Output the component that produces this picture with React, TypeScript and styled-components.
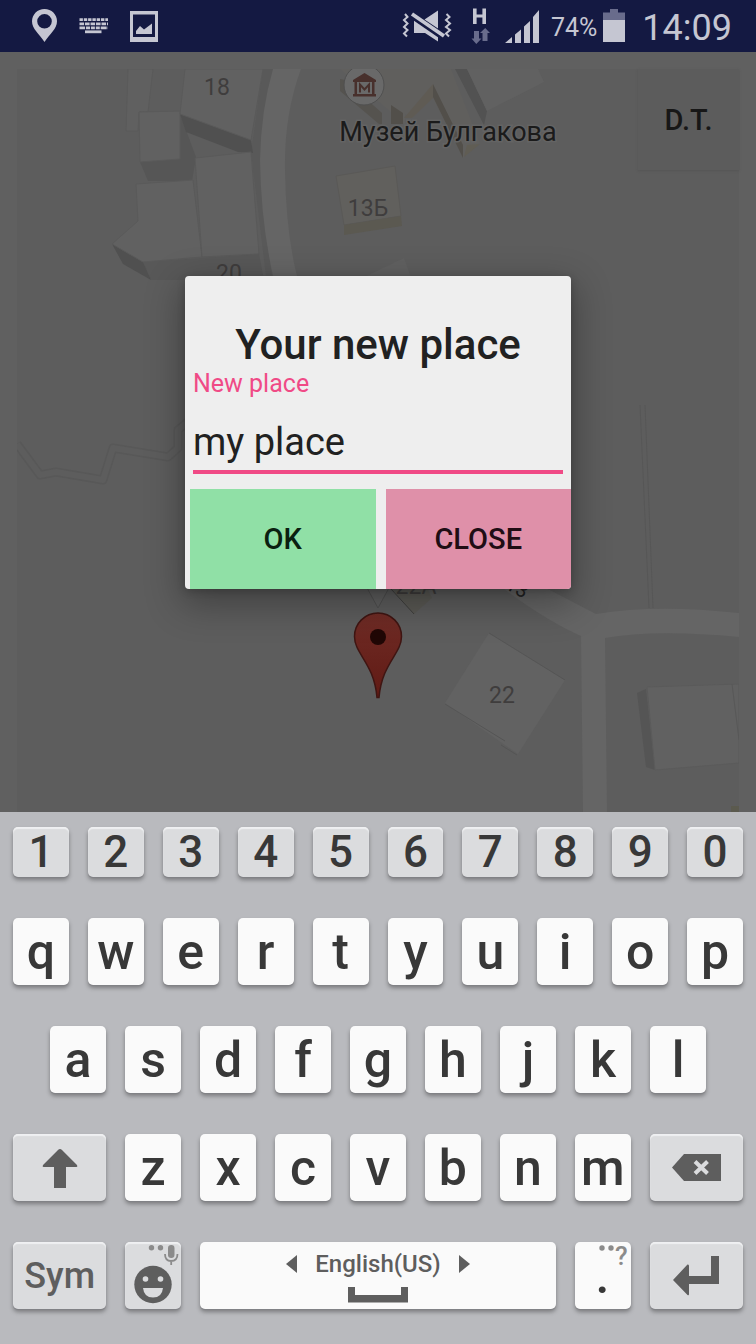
import React, { useState } from "react";
import styled, { createGlobalStyle } from "styled-components";

const GlobalStyle = createGlobalStyle`
  * { box-sizing: border-box; }
  body { margin: 0; background: #5e5e5e; font-family: Roboto, "Noto Sans", sans-serif; }
  button, input { font-family: inherit; border: 0; margin: 0; padding: 0; }
  svg { display: block; flex: none; }
`;

const Page = styled.div`
  display: flex;
  flex-direction: column;
  min-height: 100vh;
`;

/* ---------- status bar ---------- */

const StatusBar = styled.header`
  display: flex;
  align-items: center;
  justify-content: space-between;
  height: 52px;
  padding: 0 24px 0 32px;
  background: #141942;
  color: #c5c6d2;
`;

const StatusGroup = styled.div<{ $gap: number }>`
  display: flex;
  align-items: center;
  gap: ${(p) => p.$gap}px;
`;

const BatteryLevel = styled.span`
  font-size: 25px;
  line-height: 32px;
  padding-top: 4px;
`;

const Clock = styled.time`
  font-size: 36px;
  line-height: 44px;
  padding-top: 4px;
`;

const PinIcon = () => (
  <svg width="25" height="34" viewBox="32 10 25 34" fill="#c5c6d2">
    <path
      fillRule="evenodd"
      d="M44.5 10C37.500 10 32 15.500 32 22.300C32 30 39 34.500 44.500 43C50 34.500 57 30 57 22.300C57 15.500 51.500 10 44.500 10ZM44.500 15A7.300 7.300 0 1 1 44.500 29.600A7.300 7.300 0 1 1 44.500 15Z"
    />
  </svg>
);

const KeyboardIcon = () => (
  <svg width="29" height="16" viewBox="80 19 29 16" fill="none" stroke="#c5c6d2" strokeWidth="2.800">
    <path d="M80.500 20.700H109" strokeDasharray="3.400 .9" />
    <path d="M80.500 24.900H109" strokeDasharray="4.600 .9" />
    <path d="M80.500 28.900H109" strokeDasharray="5.600 .9 4 .9 4 .9 4 .9 6 1" />
    <path d="M86 32.800H102.500" />
  </svg>
);

const PictureIcon = () => (
  <svg width="28" height="31" viewBox="131 11 28 31" fill="#c5c6d2">
    <path fillRule="evenodd" d="M131 11H159V42H131ZM134 14.500V37H156V14.500Z" />
    <path d="M137 34V31L141 26L145 29.500L153 23.500V34Z" />
  </svg>
);

const MuteIcon = () => (
  <svg width="55" height="34" viewBox="404 9 55 34" fill="#c5c6d2">
    <path d="M416 20L440 36.500V41.500L427 33H416ZM426.500 19.500L440 10.500V28.500Z" />
    <path d="M413.500 16.500L444 37.500" stroke="#141942" strokeWidth="4" />
    <path d="M414 14L446 36" stroke="#c5c6d2" strokeWidth="3.800" />
    <path
      d="M407 14L409.500 17L406 20L409.500 23.500L406 27L409.500 30L406 33.500L409 36.500M448.500 14L451.500 17L448 20L452 23.500L448 27L452 30L448 33.500L451 36.500"
      fill="none"
      stroke="#c5c6d2"
      strokeWidth="2"
    />
  </svg>
);

const DataIcon = () => (
  <svg width="24" height="36" viewBox="471 8 24 36">
    <path d="M475 8.500h3.600v6h5.800v-6h3.600V24h-3.600v-6.400h-5.800V24H475z" fill="#c5c6d2" />
    <path d="M476 31h5v7.500h2.500L478.300 44L473.500 38.500H476ZM484.500 41v-8H482L487.200 28L492 33h-2.500v8Z" fill="#696c8c" />
  </svg>
);

const SignalIcon = () => (
  <svg width="34" height="34" viewBox="507 9 34 34" fill="#c5c6d2">
    <path d="M507 43L514 37V43ZM517 34.500L523 29.500V43H517ZM526 26.500L532 21V43H526ZM535 17L541 10V43H535Z" />
  </svg>
);

const BatteryIcon = () => (
  <svg width="27" height="34" viewBox="605 9 27 34">
    <path d="M612 9H620V12.500H627V21H605V12.500H612Z" fill="#696c8c" />
    <path d="M605 20H627V42H605Z" fill="#c5c6d2" />
  </svg>
);

/* ---------- map ---------- */

const MapScreen = styled.main`
  flex: 1;
  display: grid;
  grid-template: minmax(480px, 1fr) / minmax(0, 1fr);
  overflow: hidden;
  background: #606060;
  > * { grid-area: 1 / 1; }
`;

const MapFrame = styled.div`
  display: grid;
  grid-template: minmax(0, 1fr) / minmax(0, 1fr);
  margin: 17px 17px 0;
  > * { grid-area: 1 / 1; }
`;

const MapDrawing = styled.svg`
  width: 100%;
  height: 0;
  min-height: 100%;
`;

const CornerButton = styled.button`
  justify-self: end;
  align-self: start;
  width: 101px;
  height: 101px;
  background: #5c5c5c;
  color: #171717;
  font-size: 29px;
  font-weight: 500;
  box-shadow: 0 1px 2px #555555;
`;

const CityMap = () => (
  <MapDrawing viewBox="17 69 722 743" preserveAspectRatio="xMidYMin slice" role="img" aria-label="Map">
    <defs>
      <linearGradient id="pinFill" x1="0" y1="0" x2="0" y2="1">
        <stop offset="0" stopColor="#702c26" />
        <stop offset="1" stopColor="#601a14" />
      </linearGradient>
    </defs>
    <rect x="17" y="69" width="722" height="743" fill="#5d5d5d" />

    <g fill="none" strokeLinejoin="round">
      <path d="M17 444L40 475L56 472L103 480L113 448L168 457L178 448V430L190 420" stroke="#585858" strokeWidth="9" />
      <path d="M17 444L40 475L56 472L103 480L113 448L168 457L178 448V430L190 420" stroke="#5d5d5d" strokeWidth="6" />
      <path d="M640 405L649 608M645 405L653 608" stroke="#575757" strokeWidth="1" />
    </g>

    <path d="M263 69H275L262 140L264 220L272 276H266L251 152Z" fill="#595959" />
    <path d="M273 69H301Q284 115 285 170Q286 235 298 280H274Q261 225 260 160Q261 110 273 69Z" fill="#656565" />
    <path d="M500 586H542L596 614Q655 604 739 613V637Q655 629 605 638L607 812H583L581 636Q545 620 500 586Z" fill="#656565" />

    <g stroke="#5a5a5a" strokeWidth="1">
      <path d="M128 69H153L148 112H139L138 131H126Z" fill="#606060" />
      <path d="M180 114L196 157L192 181H148L140 162L180 159Z" fill="#565656" stroke="none" />
      <path d="M139 112L180 111V159L140 162Z" fill="#616161" />
      <path d="M180 114L251 140L253 153L238 152L186 132Z" fill="#505050" stroke="none" />
      <path d="M185 69H263L251 140L180 114Z" fill="#616161" />
      <path d="M143 262L259 254L264 280H151Z" fill="#585858" stroke="none" />
      <path d="M112 244L143 262L151 280L123 264Z" fill="#505050" stroke="none" />
      <path d="M136 184L193 180L202 257L143 262L112 244L138 221Z" fill="#616161" />
      <path d="M195 158L251 152L259 254L202 257Z" fill="#616161" />
    </g>

    <path d="M340 69L405 124V113L391 105L403 113L412 118L433 98L463 158L480 143L451 69Z" fill="#605f5d" />
    <path d="M340 79V91L379 124H382V113L345 80Z" fill="#55534f" />
    <path d="M404 118L433 84V98L412 118Z" fill="#5f5b54" />
    <path d="M433 84L463 145V158L433 97ZM391 105L403 113V124H391Z" fill="#524f4a" />
    <path d="M467 145L480 144L464 157Z" fill="#605d54" />
    <path d="M455 69H467L487 111L484 125Z" fill="#525252" />
    <path d="M467 69H538L544 82L487 111Z" fill="#616161" />
    <path d="M336 176L395 166L401 216L344 225Z" fill="#61605d" stroke="#5a5957" />
    <path d="M344 225L401 216L402 226L344 235Z" fill="#5b5951" />
    <path d="M358 280L404 258L412 280Z" fill="#616161" />

    <circle cx="364" cy="85" r="20" fill="#696969" stroke="#505050" />
    <path
      d="M353 80L364.500 73L376 80V82H353ZM354.500 82H357V94H354.500ZM372 82H374.500V94H372ZM353 94H376V96.500H353Z"
      fill="#48302c"
    />
    <path d="M360 92.500V84.500L364.500 89.500L369 84.500V92.500" fill="none" stroke="#48302c" strokeWidth="2" />

    <path d="M489 633L565 680L518 754L445 703Z" fill="#626262" />
    <path d="M489 633L565 680M445 704L505 741M501 745L517 755" stroke="#555555" fill="none" />
    <path d="M637 693L646 689L655 770L646 767Z" fill="#555555" />
    <path d="M647 687L739 684V763L655 770Z" fill="#616161" stroke="#5b5b5b" />
    <path d="M732 684L739 740" stroke="#585858" />
    <path d="M731 806H739V812H731Z" fill="#5b5a4e" />
    <path d="M366 586L378 608L390 586Z" fill="#606060" stroke="#505050" />
    <path d="M389 586L414 614L432 598L426 586Z" fill="#5a5954" />
    <path d="M391 589L414 614" stroke="#3f3f3d" />

    <g fontFamily="Roboto, 'Noto Sans', sans-serif" textAnchor="middle" fill="#3f3d3d">
      <g fontSize="23">
        <text x="217" y="95">18</text>
        <text x="229" y="281">20</text>
        <text x="368" y="216">13Б</text>
        <text x="502" y="703">22</text>
        <text x="416" y="594">22А</text>
      </g>
      <text x="516" y="594" fontSize="20" fill="#222222" transform="rotate(28 516 590)">13</text>
      <text x="448" y="141" fontSize="27" fill="#1b1b1b" stroke="#646464" strokeWidth="3" paintOrder="stroke">
        Музей Булгакова
      </text>
    </g>

    <path
      d="M378 613C365 613 354.500 623.500 354.500 636.500C354.500 654 374 663 377 697.500H379C382 663 401.500 654 401.500 636.500C401.500 623.500 391 613 378 613Z"
      fill="url(#pinFill)"
      stroke="#3f1512"
      strokeWidth="1.500"
    />
    <circle cx="378" cy="637" r="8" fill="#200705" />
  </MapDrawing>
);

/* ---------- dialog ---------- */

const DialogLayer = styled.div`
  position: relative;
  display: grid;
  place-items: center;
  padding-top: 1px;
  pointer-events: none;
`;

const Dialog = styled.form`
  width: 386px;
  max-width: 90%;
  padding-top: 44px;
  border-radius: 4px;
  overflow: hidden;
  background: #eeeeee;
  box-shadow: 0 12px 36px 4px rgba(0, 0, 0, 0.3), 0 2px 8px rgba(0, 0, 0, 0.2);
  pointer-events: auto;
`;

const DialogTitle = styled.h1`
  margin: 0;
  text-align: center;
  color: #212121;
  font-size: 42px;
  line-height: 50px;
  font-weight: 500;
`;

const Field = styled.div`
  display: flex;
  flex-direction: column;
  margin: 0 8px 15px;
`;

const FieldLabel = styled.label`
  color: #f04a86;
  font-size: 25px;
  line-height: 28px;
`;

const FieldInput = styled.input`
  width: 100%;
  height: 76px;
  padding-top: 16px;
  border-bottom: 4px solid #f04a86;
  border-radius: 0;
  outline: none;
  background: transparent;
  color: #212121;
  font-size: 38px;
`;

const Actions = styled.div`
  display: grid;
  grid-template-columns: 1fr 1fr;
  gap: 10px;
  padding-left: 5px;
`;

const ActionButton = styled.button<{ $tone: "accept" | "dismiss" }>`
  height: 100px;
  background: ${(p) => (p.$tone === "accept" ? "#90e0a6" : "#df90a9")};
  color: ${(p) => (p.$tone === "accept" ? "#0a2010" : "#200d14")};
  font-size: 29px;
  font-weight: 500;
`;

/* ---------- on-screen keyboard ---------- */

const Keyboard = styled.section`
  display: flex;
  flex-direction: column;
  gap: 41px;
  padding: 15px 0 35px;
  background: #b9babe;
`;

const KeyRow = styled.div<{ $columns: string; $inset?: number }>`
  display: grid;
  grid-template-columns: ${(p) => p.$columns};
  gap: 19px;
  padding: 0 ${(p) => p.$inset ?? 13}px;
`;

const Key = styled.button<{ $kind?: "letter" | "digit" | "control" }>`
  position: relative;
  display: flex;
  align-items: center;
  justify-content: center;
  min-width: 0;
  height: ${(p) => (p.$kind === "digit" ? 50 : 67)}px;
  border-radius: 5px;
  background: ${(p) => (p.$kind ? "#dbdcde" : "#fafafa")};
  color: ${(p) => (p.$kind === "control" ? "#5e5e5e" : "#383838")};
  font-size: ${(p) => (p.$kind === "digit" ? 44 : p.$kind === "control" ? 36 : 50)}px;
  line-height: 50px;
  font-weight: 500;
  box-shadow: ${(p) => (p.$kind ? "inset 0 2px 1px #eff0f2, " : "")}0 1px 0 #818286, 0 3px 4px rgba(0, 0, 0, 0.34);
`;

const SpaceKey = styled(Key)`
  flex-direction: column;
  justify-content: flex-start;
  gap: 9px;
  padding-top: 8px;
  color: #5e5e5e;
  font-size: 24px;
  line-height: 28px;
`;

const Language = styled.span`
  display: flex;
  align-items: center;
  gap: 18px;
`;

const KeyHint = styled.span`
  position: absolute;
  top: 0;
  right: 3px;
  display: flex;
  gap: 1px;
  color: #8b8b8b;
  font-size: 26px;
  line-height: 28px;
  font-weight: 500;
`;

const DIGITS = "1234567890".split("");
const TOP = "qwertyuiop".split("");
const HOME = "asdfghjkl".split("");
const BOTTOM = "zxcvbnm".split("");

const ShiftIcon = () => (
  <svg width="36" height="40" viewBox="0 0 36 40" fill="#5e5e5e">
    <path d="M18 1Q19 1 20 2L35 17Q36 19 34.500 19H24V40H12V19H1.500Q0 19 1 17L16 2Q17 1 18 1Z" />
  </svg>
);

const BackspaceIcon = () => (
  <svg width="49" height="27" viewBox="0 0 49 27">
    <path d="M0 13.500L12 0H49V27H12Z" fill="#5e5e5e" />
    <path d="M23 7.500L35.500 19.500M35.500 7.500L23 19.500" stroke="#dbdcde" strokeWidth="4" />
  </svg>
);

const EnterIcon = () => (
  <svg width="46" height="40" viewBox="0 0 46 40" fill="#5e5e5e">
    <path d="M38 0H46V28H16V38Q16 40 14.500 39L0 24L14.500 8.500Q16 8 16 10V20H38Z" />
  </svg>
);

const EmojiIcon = () => (
  <svg width="56" height="67" viewBox="125 1242 56 67" fill="#5e5e5e">
    <circle cx="153" cy="1284.500" r="18.700" />
    <circle cx="145.500" cy="1279" r="2.800" fill="#dbdcde" />
    <circle cx="160.500" cy="1279" r="2.800" fill="#dbdcde" />
    <path d="M143 1288H163Q162 1297.500 153 1297.500Q144 1297.500 143 1288Z" fill="#dbdcde" />
    <g fill="#8b8b8b">
      <circle cx="151.500" cy="1247.800" r="2.700" />
      <circle cx="160.500" cy="1247.800" r="2.700" />
      <rect x="168" y="1245" width="6.500" height="13" rx="3.200" />
      <path d="M165 1254Q165 1261 171 1261Q177.500 1261 177.500 1254M171.200 1261V1265" fill="none" stroke="#8b8b8b" strokeWidth="1.800" />
    </g>
  </svg>
);

const DotsIcon = () => (
  <svg width="15" height="12" viewBox="0 0 15 12" fill="#8b8b8b">
    <circle cx="3" cy="6" r="2.700" />
    <circle cx="12" cy="6" r="2.700" />
  </svg>
);

const ArrowIcon = ({ flip }: { flip?: boolean }) => (
  <svg width="11" height="18" viewBox="0 0 11 18" fill="#5e5e5e">
    <path d={flip ? "M0 0L11 9L0 18Z" : "M11 0L0 9L11 18Z"} />
  </svg>
);

const SpaceIcon = () => (
  <svg width="60" height="16" viewBox="0 0 60 16" fill="#5e5e5e">
    <path d="M0 0H7V8H53V0H60V15.500H0Z" />
  </svg>
);

export default function App() {
  const [place, setPlace] = useState("my place");
  const type = (ch: string) => setPlace((p) => p + ch);
  const letters = (keys: string[], kind?: "digit") =>
    keys.map((k) => (
      <Key key={k} type="button" $kind={kind} onClick={() => type(k)}>
        {k}
      </Key>
    ));

  return (
    <>
      <GlobalStyle />
      <Page>
        <StatusBar>
          <StatusGroup $gap={22}>
            <PinIcon />
            <KeyboardIcon />
            <PictureIcon />
          </StatusGroup>
          <StatusGroup $gap={12}>
            <MuteIcon />
            <DataIcon />
            <SignalIcon />
            <StatusGroup $gap={6}>
              <BatteryLevel>74%</BatteryLevel>
              <BatteryIcon />
            </StatusGroup>
            <Clock>14:09</Clock>
          </StatusGroup>
        </StatusBar>

        <MapScreen>
          <MapFrame>
            <CityMap />
            <CornerButton type="button">D.T.</CornerButton>
          </MapFrame>
          <DialogLayer>
            <Dialog role="dialog" aria-labelledby="dialog-title" onSubmit={(e) => e.preventDefault()}>
              <DialogTitle id="dialog-title">Your new place</DialogTitle>
              <Field>
                <FieldLabel htmlFor="place">New place</FieldLabel>
                <FieldInput id="place" type="text" value={place} onChange={(e) => setPlace(e.target.value)} />
              </Field>
              <Actions>
                <ActionButton type="submit" $tone="accept">OK</ActionButton>
                <ActionButton type="button" $tone="dismiss">CLOSE</ActionButton>
              </Actions>
            </Dialog>
          </DialogLayer>
        </MapScreen>

        <Keyboard aria-label="Keyboard">
          <KeyRow $columns="repeat(10, 1fr)">{letters(DIGITS, "digit")}</KeyRow>
          <KeyRow $columns="repeat(10, 1fr)">{letters(TOP)}</KeyRow>
          <KeyRow $columns="repeat(9, 1fr)" $inset={50}>{letters(HOME)}</KeyRow>
          <KeyRow $columns="5fr repeat(7, 3fr) 5fr">
            <Key type="button" $kind="control" aria-label="Shift"><ShiftIcon /></Key>
            {letters(BOTTOM)}
            <Key type="button" $kind="control" aria-label="Backspace" onClick={() => setPlace((p) => p.slice(0, -1))}>
              <BackspaceIcon />
            </Key>
          </KeyRow>
          <KeyRow $columns="5fr 3fr 19fr 3fr 5fr">
            <Key type="button" $kind="control">Sym</Key>
            <Key type="button" $kind="control" aria-label="Emoji"><EmojiIcon /></Key>
            <SpaceKey type="button" onClick={() => type(" ")}>
              <Language>
                <ArrowIcon />
                English(US)
                <ArrowIcon flip />
              </Language>
              <SpaceIcon />
            </SpaceKey>
            <Key type="button" onClick={() => type(".")}>
              .
              <KeyHint><DotsIcon />?</KeyHint>
            </Key>
            <Key type="button" $kind="control" aria-label="Enter"><EnterIcon /></Key>
          </KeyRow>
        </Keyboard>
      </Page>
    </>
  );
}
